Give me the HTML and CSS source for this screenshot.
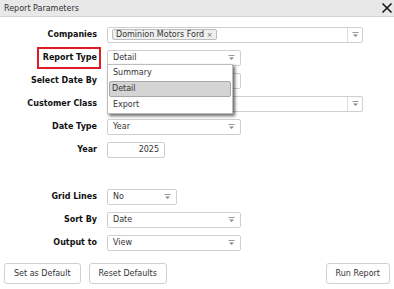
FILE: index.html
```html
<!DOCTYPE html>
<html>
<head>
<meta charset="utf-8">
<link rel="stylesheet" href="styles.css">
</head>
<body>
<div class="dialog">
  <div class="titlebar">
    <span class="title">Report Parameters</span>
    <svg class="close" width="12" height="12" viewBox="0 0 12 12"><path d="M1.5 1.5L10.5 10.5M10.5 1.5L1.5 10.5" stroke="#111" stroke-width="1.5" fill="none"/></svg>
  </div>
  <div class="form">
    <div class="label">Companies</div>
    <div class="ctrl"><div class="box wide multi"><span class="tag">Dominion Motors Ford <span class="x">×</span></span><span class="sep"></span><svg class="arrow" width="7" height="6" viewBox="0 0 7 6"><path d="M0.5 0.5H6.5" stroke="#999" stroke-width="1"/><path d="M1 2.5H6L3.5 5z" fill="#888"/></svg></div></div>

    <div class="label"><span class="hl">Report Type</span></div>
    <div class="ctrl"><div class="dd-wrap"><div class="box med sel"><span>Detail</span><svg class="arrow" width="7" height="6" viewBox="0 0 7 6"><path d="M0.5 0.5H6.5" stroke="#999" stroke-width="1"/><path d="M1 2.5H6L3.5 5z" fill="#888"/></svg></div>
      <div class="popup">
        <div class="item">Summary</div>
        <div class="item active">Detail</div>
        <div class="item">Export</div>
      </div></div></div>

    <div class="label">Select Date By</div>
    <div class="ctrl"><div class="box med sel"><span></span></div></div>

    <div class="label">Customer Class</div>
    <div class="ctrl"><div class="box wide multi"><span class="sep"></span><svg class="arrow" width="7" height="6" viewBox="0 0 7 6"><path d="M0.5 0.5H6.5" stroke="#999" stroke-width="1"/><path d="M1 2.5H6L3.5 5z" fill="#888"/></svg></div></div>

    <div class="label">Date Type</div>
    <div class="ctrl"><div class="box med sel"><span>Year</span><svg class="arrow" width="7" height="6" viewBox="0 0 7 6"><path d="M0.5 0.5H6.5" stroke="#999" stroke-width="1"/><path d="M1 2.5H6L3.5 5z" fill="#888"/></svg></div></div>

    <div class="label">Year</div>
    <div class="ctrl"><div class="box small num">2025</div></div>

    <div class="label blank"></div>
    <div class="ctrl blank"></div>

    <div class="label">Grid Lines</div>
    <div class="ctrl"><div class="box short sel"><span>No</span><svg class="arrow" width="7" height="6" viewBox="0 0 7 6"><path d="M0.5 0.5H6.5" stroke="#999" stroke-width="1"/><path d="M1 2.5H6L3.5 5z" fill="#888"/></svg></div></div>

    <div class="label">Sort By</div>
    <div class="ctrl"><div class="box med sel"><span>Date</span><svg class="arrow" width="7" height="6" viewBox="0 0 7 6"><path d="M0.5 0.5H6.5" stroke="#999" stroke-width="1"/><path d="M1 2.5H6L3.5 5z" fill="#888"/></svg></div></div>

    <div class="label">Output to</div>
    <div class="ctrl"><div class="box med sel"><span>View</span><svg class="arrow" width="7" height="6" viewBox="0 0 7 6"><path d="M0.5 0.5H6.5" stroke="#999" stroke-width="1"/><path d="M1 2.5H6L3.5 5z" fill="#888"/></svg></div></div>
  </div>
  <div class="footer">
    <button class="btn">Set as Default</button>
    <button class="btn">Reset Defaults</button>
    <span class="spacer"></span>
    <button class="btn">Run Report</button>
  </div>
</div>
</body>
</html>
```
FILE: styles.css
```css
html, body {
  margin: 0;
  padding: 0;
  background: #fff;
}
body {
  font-family: "DejaVu Sans", Verdana, sans-serif;
  font-size: 8px;
  color: #333;
}
.dialog {
  width: 394px;
  height: 289px;
  display: flex;
  flex-direction: column;
}
.titlebar {
  height: 16px;
  background: #e8e8e8;
  border-bottom: 1px solid #d4d4d4;
  display: flex;
  align-items: center;
  justify-content: space-between;
  padding: 0 1px 0 4px;
}
.title {
  color: #333;
}
.close {
  display: block;
  margin-top: -1px;
}
.form {
  display: grid;
  grid-template-columns: 97px 1fr;
  grid-template-rows: repeat(6, 23px) 24px repeat(3, 23px);
  column-gap: 10px;
  padding-top: 6px;
}
.label {
  font-weight: bold;
  color: #111;
  display: flex;
  align-items: center;
  justify-content: flex-end;
}
.ctrl {
  display: flex;
  align-items: center;
}
.hl {
  border: 2px solid #e01b24;
  padding: 4px 2px 4px 4px;
  margin-right: -4px;
  line-height: 10px;
}
.box {
  box-sizing: border-box;
  height: 16px;
  border: 1px solid #cfcfcf;
  border-radius: 2px;
  background: #fff;
  display: flex;
  align-items: center;
  color: #333;
}
.wide { width: 256px; }
.med { width: 134px; }
.short { width: 70px; }
.small { width: 58px; }
.sel {
  padding: 0 0 0 5px;
  justify-content: space-between;
}
.sel .arrow {
  margin-right: 5px;
}
.multi {
  padding-left: 4px;
  justify-content: flex-end;
}
.multi .tag {
  margin-right: auto;
}
.multi .sep {
  align-self: stretch;
  width: 1px;
  background: #dcdcdc;
  margin-right: 4px;
}
.multi .arrow {
  margin-right: 3px;
}
.arrow {
  display: block;
}
.tag {
  height: 11px;
  box-sizing: border-box;
  border: 1px solid #bdbdbd;
  border-radius: 2px;
  background: #efefef;
  padding: 0 3px;
  display: flex;
  align-items: center;
  white-space: pre;
  color: #333;
}
.tag .x {
  font-size: 7px;
  color: #666;
}
.num {
  justify-content: flex-end;
  padding-right: 5px;
}
.dd-wrap {
  position: relative;
}
.popup {
  position: absolute;
  top: 14px;
  left: 0;
  width: 126px;
  box-sizing: border-box;
  border: 1px solid #bdbdbd;
  background: #fff;
  box-shadow: 2px 2px 3px rgba(0, 0, 0, 0.6);
  padding: 0 1px;
  z-index: 5;
}
.item {
  box-sizing: border-box;
  height: 16px;
  display: flex;
  align-items: center;
  padding-left: 3px;
  color: #333;
  border: 1px solid transparent;
}
.item.active {
  background: #d4d4d4;
  border-color: #a8a8a8;
  border-radius: 2px;
  padding-left: 2px;
}
.footer {
  display: flex;
  align-items: center;
  gap: 8px;
  padding: 0 4px;
  margin-top: 9px;
}
.spacer {
  flex: 1;
}
.btn {
  font-family: "DejaVu Sans", Verdana, sans-serif;
  font-size: 8px;
  color: #333;
  height: 21px;
  padding: 0 9px;
  background: #fff;
  border: 1px solid #d0d0d0;
  border-radius: 3px;
  margin: 0;
}
```
